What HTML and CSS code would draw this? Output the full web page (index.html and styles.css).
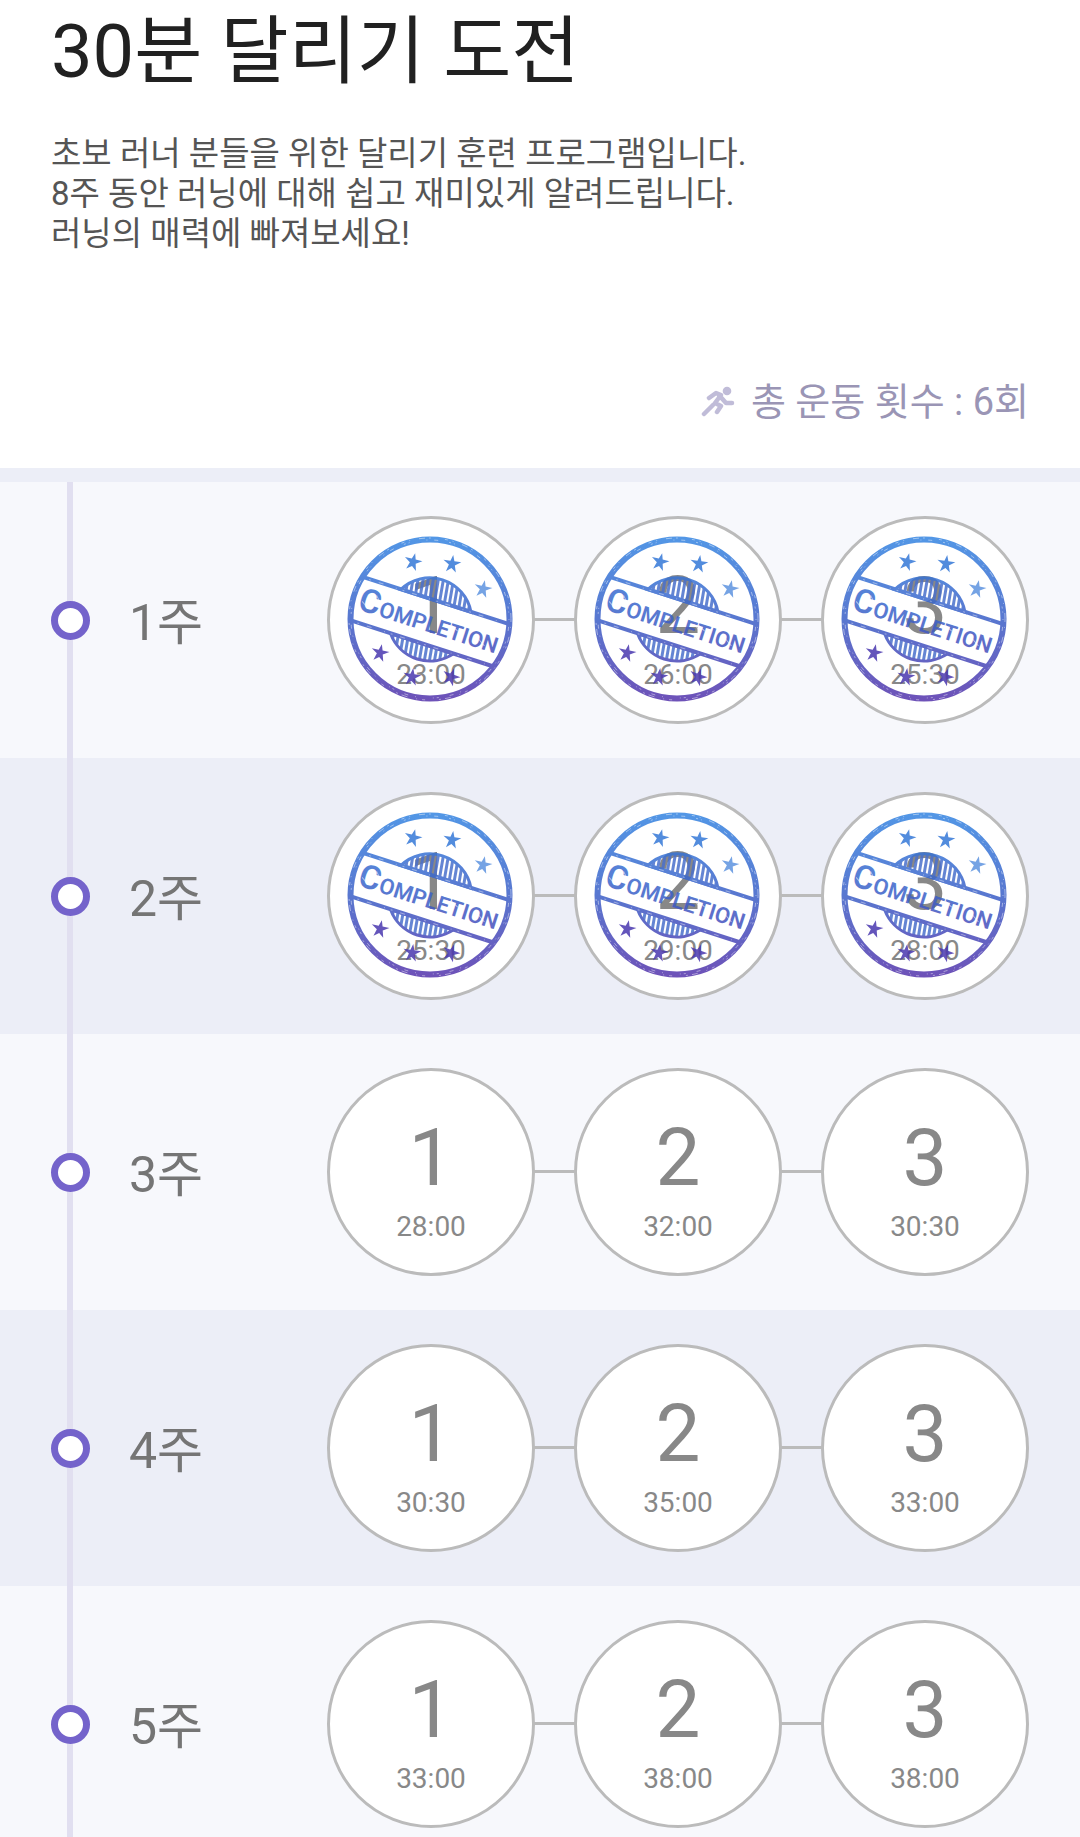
FILE: index.html
```
<!DOCTYPE html>
<html lang="ko">
<head>
  <meta charset="UTF-8">
  <meta name="viewport" content="width=device-width, initial-scale=1.0">
  <title>30분 달리기 도전</title>
  <link rel="stylesheet" href="styles.css">
</head>
<body>
  <!-- completion stamp, reused by every finished session -->
  <svg class="defs" aria-hidden="true">
    <defs>
      <linearGradient id="ink" gradientUnits="userSpaceOnUse" x1="0" y1="-82" x2="0" y2="82">
        <stop offset="0" stop-color="#3585e2"/>
        <stop offset="0.5" stop-color="#3c60c8"/>
        <stop offset="1" stop-color="#5534ac"/>
      </linearGradient>
      <linearGradient id="ink-tilted" gradientUnits="userSpaceOnUse" x1="-25" y1="-78" x2="25" y2="78">
        <stop offset="0" stop-color="#3585e2"/>
        <stop offset="0.5" stop-color="#3c60c8"/>
        <stop offset="1" stop-color="#5534ac"/>
      </linearGradient>
      <pattern id="hatch" patternUnits="userSpaceOnUse" width="5" height="60" patternTransform="rotate(-8)">
        <rect width="3" height="60" fill="#4a70cc"/>
      </pattern>
      <path id="star" d="M0 -9 L2 -3 L9 -3 L3 1 L5 8 L0 4 L-5 8 L-3 1 L-9 -3 L-2 -3 Z"/>
      <symbol id="stamp" viewBox="-83 -83 166 166">
        <circle r="79.5" fill="none" stroke="url(#ink)" stroke-width="6"/>
        <g fill="none" stroke="#fff" stroke-opacity="0.45">
          <circle r="81" stroke-width="1" stroke-dasharray="3 5 1 9 6 4 2 14"/>
          <circle r="79" stroke-width="1" stroke-dasharray="1 7 4 11 2 3 1 17"/>
        </g>
        <g fill="#3578d8">
          <use href="#star" transform="translate(-17 -57) rotate(14)"/>
          <use href="#star" transform="translate(22 -55) rotate(8)"/>
          <use href="#star" transform="translate(53 -30) rotate(12)" opacity="0.8"/>
        </g>
        <g fill="#4a38b0">
          <use href="#star" transform="translate(-50 34) rotate(12)"/>
          <use href="#star" transform="translate(-18 58) rotate(8)"/>
          <use href="#star" transform="translate(21 58) rotate(20)"/>
        </g>
        <g transform="rotate(17.8)">
          <g stroke="url(#ink-tilted)" stroke-width="3">
            <path d="M-37 -19 A42 42 0 0 1 37 -19 Z" fill="url(#hatch)"/>
            <path d="M-33 26 A42 42 0 0 0 33 26 Z" fill="url(#hatch)"/>
          </g>
          <path d="M-77 -19.5 L77 -19.3 M-75 25.5 L75 25.8" stroke="url(#ink-tilted)" stroke-width="4"/>
          <path d="M-70 -19 H70 M-68 26 H68" stroke="#fff" stroke-opacity="0.4" stroke-width="1" stroke-dasharray="2 8 5 13 1 6"/>
          <g class="stamp-text" fill="url(#ink-tilted)">
            <text x="-73" y="13" font-size="33">C</text>
            <text x="-51" y="13" font-size="22">OMPLETION</text>
          </g>
          <path d="M-70 4 L-62 9 M-58 -6 L-50 2 M18 0 L26 5 M22 -1 L30 3 M52 4 L60 9" stroke="#fff" stroke-opacity="0.5" stroke-width="1"/>
        </g>
      </symbol>
    </defs>
  </svg>

  <header class="intro">
    <h1>30분 달리기 도전</h1>
    <p class="description">
      초보 러너 분들을 위한 달리기 훈련 프로그램입니다.<br>
      8주 동안 러닝에 대해 쉽고 재미있게 알려드립니다.<br>
      러닝의 매력에 빠져보세요!
    </p>
    <p class="total">
      <svg class="runner" viewBox="0 0 34 32" aria-hidden="true">
        <circle cx="26" cy="5" r="4.3" fill="currentColor"/>
        <path d="M8 12 L15 7 L20 9 L14 17 L20 20 L16 26 M17 8 L25 17 H31 M12 19 L3 28" fill="none" stroke="currentColor" stroke-width="4.5" stroke-linecap="round" stroke-linejoin="round"/>
      </svg>
      총 운동 횟수 : 6회
    </p>
  </header>

  <main class="weeks">
    <section class="week">
      <span class="dot"></span>
      <h2>1주</h2>
      <div class="sessions">
        <button class="session"><span class="num">1</span><span class="time">23:00</span><svg class="stamp"><use href="#stamp"/></svg></button>
        <button class="session"><span class="num">2</span><span class="time">26:00</span><svg class="stamp"><use href="#stamp"/></svg></button>
        <button class="session"><span class="num">3</span><span class="time">25:30</span><svg class="stamp"><use href="#stamp"/></svg></button>
      </div>
    </section>
    <section class="week">
      <span class="dot"></span>
      <h2>2주</h2>
      <div class="sessions">
        <button class="session"><span class="num">1</span><span class="time">25:30</span><svg class="stamp"><use href="#stamp"/></svg></button>
        <button class="session"><span class="num">2</span><span class="time">29:00</span><svg class="stamp"><use href="#stamp"/></svg></button>
        <button class="session"><span class="num">3</span><span class="time">28:00</span><svg class="stamp"><use href="#stamp"/></svg></button>
      </div>
    </section>
    <section class="week">
      <span class="dot"></span>
      <h2>3주</h2>
      <div class="sessions">
        <button class="session"><span class="num">1</span><span class="time">28:00</span></button>
        <button class="session"><span class="num">2</span><span class="time">32:00</span></button>
        <button class="session"><span class="num">3</span><span class="time">30:30</span></button>
      </div>
    </section>
    <section class="week">
      <span class="dot"></span>
      <h2>4주</h2>
      <div class="sessions">
        <button class="session"><span class="num">1</span><span class="time">30:30</span></button>
        <button class="session"><span class="num">2</span><span class="time">35:00</span></button>
        <button class="session"><span class="num">3</span><span class="time">33:00</span></button>
      </div>
    </section>
    <section class="week">
      <span class="dot"></span>
      <h2>5주</h2>
      <div class="sessions">
        <button class="session"><span class="num">1</span><span class="time">33:00</span></button>
        <button class="session"><span class="num">2</span><span class="time">38:00</span></button>
        <button class="session"><span class="num">3</span><span class="time">38:00</span></button>
      </div>
    </section>
  </main>
</body>
</html>
```

FILE: styles.css
```
* {
  box-sizing: border-box;
}

body {
  margin: 0;
  font-family: Roboto, "Noto Sans CJK KR", sans-serif;
  background: #fff;
  color: #212121;
}

.defs {
  position: absolute;
  width: 0;
  height: 0;
}

.intro {
  padding: 0 51px 40px;
  border-bottom: 14px solid #eceef7;
}

h1 {
  margin: 0;
  font-size: 74px;
  font-weight: 400;
  line-height: 104px;
}

.description {
  margin: 30px 0 0;
  font-size: 33px;
  line-height: 40px;
  color: #555;
}

.total {
  display: flex;
  justify-content: flex-end;
  align-items: center;
  gap: 16px;
  margin: 122px 0 0;
  font-size: 38px;
  line-height: 52px;
  color: #9a95b5;
}

.runner {
  width: 34px;
  height: 32px;
  color: #c0bcd8;
}

.week {
  position: relative;
  display: flex;
  align-items: center;
  height: 276px;
  padding: 0 51px;
  background: #f7f8fc;
}

.week:nth-child(even) {
  background: #eceef7;
}

/* timeline running through the dots */
.week::before {
  content: "";
  position: absolute;
  top: 0;
  bottom: 0;
  left: 67px;
  width: 6px;
  background: #e1dff0;
}

.dot {
  position: relative;
  width: 39px;
  height: 39px;
  border: 7px solid #7463cb;
  border-radius: 50%;
  background: #fff;
}

h2 {
  margin: 0 0 0 39px;
  padding-top: 6px;
  font-size: 50px;
  font-weight: 400;
  line-height: 72px;
  color: #757575;
}

.sessions {
  display: flex;
  gap: 39px;
  margin-left: auto;
}

.session {
  position: relative;
  display: flex;
  flex-direction: column;
  align-items: center;
  width: 208px;
  height: 208px;
  padding: 40px 0 0;
  border: 3px solid #bbb;
  border-radius: 50%;
  background: #fff;
  font-family: inherit;
  color: #888;
  cursor: pointer;
}

.session + .session::before {
  content: "";
  position: absolute;
  top: 99px;
  right: 100%;
  width: 43px;
  height: 3px;
  background: #bbb;
}

.num {
  font-size: 80px;
  line-height: 94px;
}

.time {
  font-size: 28px;
  line-height: 44px;
}

.stamp {
  position: absolute;
  top: 17px;
  left: 17px;
  width: 166px;
  height: 166px;
  opacity: 0.85;
}

.stamp-text {
  font-family: Roboto, sans-serif;
  font-weight: 600;
}
```
